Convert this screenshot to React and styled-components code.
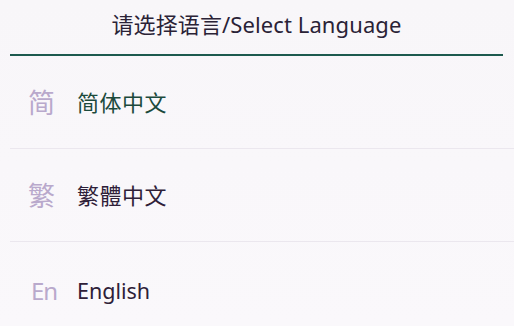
import React, { useState } from "react";
import styled, { createGlobalStyle } from "styled-components";

const GlobalStyle = createGlobalStyle`
  html, body {
    margin: 0;
    padding: 0;
    background: #f9f7fa;
  }
  body {
    font-family: "Noto Sans", "Noto Sans CJK SC", sans-serif;
  }
`;

const Screen = styled.div`
  width: 514px;
  height: 326px;
  overflow: hidden;
  background: linear-gradient(180deg, #f8f6f9 0%, #faf8fb 100%);
  display: flex;
  flex-direction: column;
`;

const Header = styled.div`
  flex-shrink: 0;
  height: 56px;
  margin: 0 11px 0 10px;
  padding-bottom: 9px;
  box-sizing: border-box;
  display: flex;
  align-items: center;
  justify-content: center;
  border-bottom: 2px solid #1d5a4e;
`;

const Title = styled.div`
  font-size: 22px;
  color: #2a2236;
  letter-spacing: 0.1px;
`;

const List = styled.div`
  flex-shrink: 0;
  display: flex;
  flex-direction: column;
`;

const Row = styled.div`
  flex-shrink: 0;
  height: ${(p) => (p.$last ? "96px" : "93px")};
  margin-left: 10px;
  padding-bottom: ${(p) => (p.$last ? "0" : "2px")};
  box-sizing: border-box;
  display: flex;
  align-items: center;
  border-bottom: ${(p) => (p.$last ? "none" : "1px solid #ebe7ee")};
  cursor: pointer;
`;

const Badge = styled.div`
  width: 56px;
  box-sizing: border-box;
  padding-left: ${(p) => (p.$latin ? "21px" : "18px")};
  font-size: ${(p) => (p.$latin ? "24px" : "27px")};
  letter-spacing: ${(p) => (p.$latin ? "-1px" : "0")};
  color: #b9a9cc;
`;

const Label = styled.div`
  margin-left: 11px;
  font-size: ${(p) => (p.$latin ? "21.5px" : "22px")};
  letter-spacing: ${(p) => (p.$latin ? "0" : "0.5px")};
  color: ${(p) => (p.$active ? "#1c4a3c" : "#2e2038")};
`;

const languages = [
  { key: "sc", badge: "简", label: "简体中文" },
  { key: "tc", badge: "繁", label: "繁體中文" },
  { key: "en", badge: "En", label: "English", latin: true },
];

export default function App() {
  const [selected, setSelected] = useState("sc");

  return (
    <>
      <GlobalStyle />
      <Screen>
        <Header>
          <Title>请选择语言/Select Language</Title>
        </Header>
        <List>
          {languages.map((lang, i) => (
            <Row
              key={lang.key}
              $last={i === languages.length - 1}
              onClick={() => setSelected(lang.key)}
            >
              <Badge $latin={lang.latin}>{lang.badge}</Badge>
              <Label $latin={lang.latin} $active={selected === lang.key}>
                {lang.label}
              </Label>
            </Row>
          ))}
        </List>
      </Screen>
    </>
  );
}
